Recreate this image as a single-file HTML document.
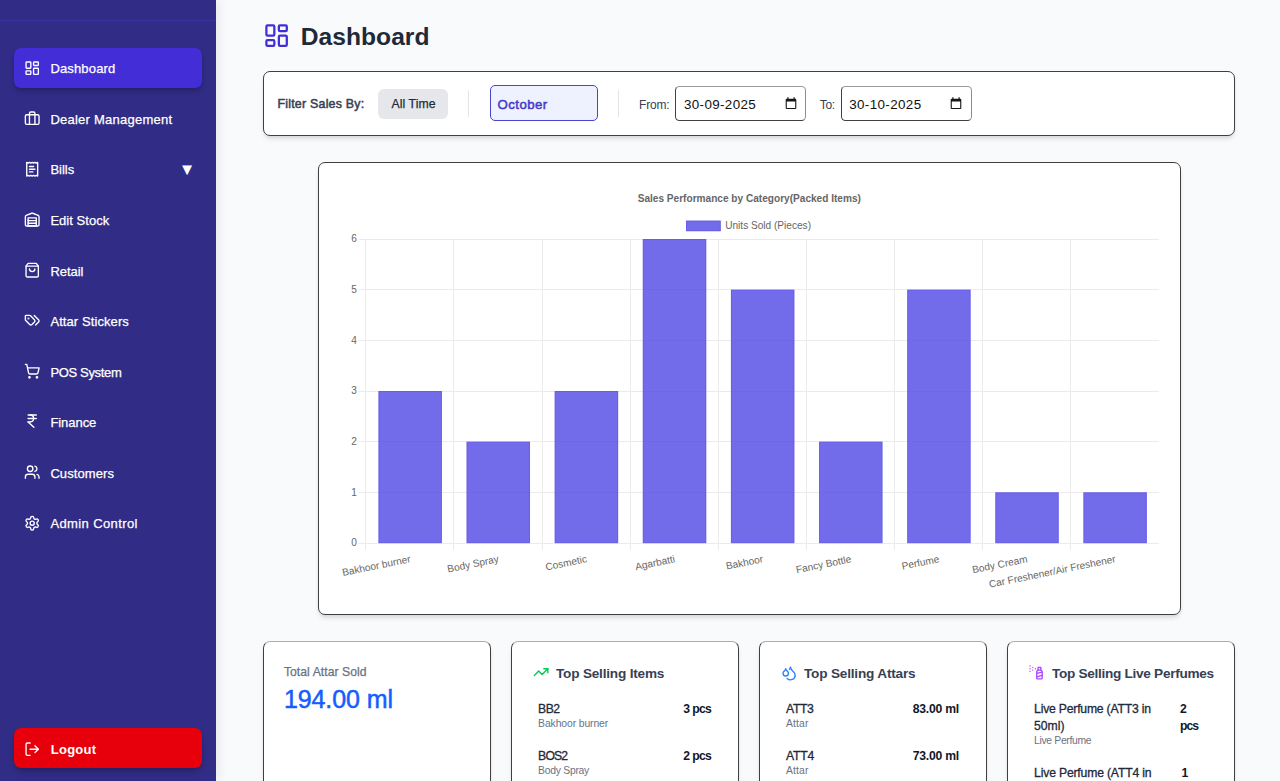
<!DOCTYPE html>
<html lang="en">
<head>
<meta charset="utf-8">
<title>Dashboard</title>
<style>
*{box-sizing:border-box;margin:0;padding:0}
html,body{width:1280px;height:781px;overflow:hidden}
body{position:relative;background:#f9fafb;font-family:"Liberation Sans", Arial, sans-serif;}
.t{position:absolute;white-space:nowrap;line-height:1;display:block}
h1,h2{font:inherit}
ul{list-style:none}
i{font-style:normal;display:block}
.w,button.w,a.w{position:static;display:block;background:none;border:0;font:inherit;color:inherit;text-decoration:none}
.ic{position:absolute;display:block;overflow:visible}
.side{position:absolute;left:0;top:0;width:216px;height:781px;background:#312c85;box-shadow:3px 0 10px rgba(0,0,0,.07)}
.side-line{position:absolute;left:0;top:20px;width:216px;height:1px;background:#3a32a4}
.nav-active{position:absolute;left:13.5px;top:48.2px;width:188.5px;height:39.6px;border-radius:7px;background:#432dd7;box-shadow:0 4px 6px -1px rgba(0,0,0,.18),0 2px 4px -2px rgba(0,0,0,.18)}
.logout{position:absolute;left:13.5px;top:728px;width:188.5px;height:40px;border-radius:7px;background:#e7000b;box-shadow:0 4px 6px -1px rgba(0,0,0,.2),0 2px 4px -2px rgba(0,0,0,.2)}
.card{position:absolute;background:#fff;border:1px solid #404040;border-radius:7px;box-shadow:0 4px 5px -1px rgba(0,0,0,.1),0 2px 4px -2px rgba(0,0,0,.1)}
.filter{left:263px;top:71px;width:972px;height:65px}
.chart{left:318px;top:162px;width:863px;height:453px}
.stat{top:641px;width:227.5px;height:200px;border-top-color:#adadad}
.btn-all{position:absolute;left:378.2px;top:88.6px;width:69.8px;height:30px;border-radius:6px;background:#e5e7eb}
.btn-oct{position:absolute;left:489.5px;top:85px;width:108.5px;height:36.3px;border-radius:5px;background:#eef2ff;border:1.6px solid #4c42cc}
.vdiv{position:absolute;top:89.7px;width:1px;height:27.3px;background:#e3e5e9}
.date{position:absolute;top:86px;width:131.3px;height:35px;border:1px solid #404040;border-top-color:#9a9a9a;border-right-color:#8c8c8c;border-radius:4.5px;background:#fff}
.chartsvg{position:absolute;left:0;top:0;pointer-events:none}
</style>
</head>
<body>
<aside class="side">
<div class="side-line"></div>
<nav><ul>
<li><a class="w on">
<i class="nav-active"></i>
<svg class="ic" style="left:23.80px;top:59.60px;color:#fff" width="16.40" height="16.40" viewBox="0 0 24 24" fill="none" stroke="currentColor" stroke-width="2" stroke-linecap="round" stroke-linejoin="round"><rect width="7" height="9" x="3" y="3" rx="1"/><rect width="7" height="5" x="14" y="3" rx="1"/><rect width="7" height="9" x="14" y="12" rx="1"/><rect width="7" height="5" x="3" y="16" rx="1"/></svg>
<span class="t" style="left:50.40px;top:61.00px;font-size:13.00px;font-weight:400;color:#ffffff;letter-spacing:0.156px;line-height:15px;-webkit-text-stroke:0.25px #ffffff;">Dashboard</span>
</a></li>
<li><a class="w">
<svg class="ic" style="left:23.80px;top:110.15px;color:#fff" width="16.40" height="16.40" viewBox="0 0 24 24" fill="none" stroke="currentColor" stroke-width="2" stroke-linecap="round" stroke-linejoin="round"><rect width="20" height="14" x="2" y="7" rx="2" ry="2"/><path d="M16 21V5a2 2 0 0 0-2-2h-4a2 2 0 0 0-2 2v16"/></svg>
<span class="t" style="left:50.40px;top:112.00px;font-size:13.00px;font-weight:400;color:#ffffff;letter-spacing:0.248px;line-height:15px;-webkit-text-stroke:0.25px #ffffff;">Dealer Management</span>
</a></li>
<li><a class="w">
<svg class="ic" style="left:23.80px;top:160.70px;color:#fff" width="16.40" height="16.40" viewBox="0 0 24 24" fill="none" stroke="currentColor" stroke-width="2" stroke-linecap="round" stroke-linejoin="round"><path d="M4 2v20l2-1 2 1 2-1 2 1 2-1 2 1 2-1 2 1V2l-2 1-2-1-2 1-2-1-2 1-2-1-2 1Z"/><path d="M14 8H8"/><path d="M16 12H8"/><path d="M13 16H8"/></svg>
<span class="t" style="left:50.40px;top:162.00px;font-size:13.00px;font-weight:400;color:#ffffff;letter-spacing:-0.007px;line-height:15px;-webkit-text-stroke:0.25px #ffffff;">Bills</span>
<span class="t" style="left:178.70px;top:160.00px;font-size:16.80px;font-weight:400;color:#ffffff;letter-spacing:0.000px;line-height:19px;">▼</span>
</a></li>
<li><a class="w">
<svg class="ic" style="left:23.80px;top:211.25px;color:#fff" width="16.40" height="16.40" viewBox="0 0 24 24" fill="none" stroke="currentColor" stroke-width="2" stroke-linecap="round" stroke-linejoin="round"><path d="M22 8.35V20a2 2 0 0 1-2 2H4a2 2 0 0 1-2-2V8.35A2 2 0 0 1 3.26 6.5l8-3.2a2 2 0 0 1 1.48 0l8 3.2A2 2 0 0 1 22 8.35Z"/><path d="M6 18h12"/><path d="M6 14h12"/><rect width="12" height="12" x="6" y="10"/></svg>
<span class="t" style="left:50.40px;top:213.00px;font-size:13.00px;font-weight:400;color:#ffffff;letter-spacing:0.038px;line-height:15px;-webkit-text-stroke:0.25px #ffffff;">Edit Stock</span>
</a></li>
<li><a class="w">
<svg class="ic" style="left:23.80px;top:261.80px;color:#fff" width="16.40" height="16.40" viewBox="0 0 24 24" fill="none" stroke="currentColor" stroke-width="2" stroke-linecap="round" stroke-linejoin="round"><path d="M6 2 3 6v14a2 2 0 0 0 2 2h14a2 2 0 0 0 2-2V6l-3-4Z"/><path d="M3 6h18"/><path d="M16 10a4 4 0 0 1-8 0"/></svg>
<span class="t" style="left:50.40px;top:264.00px;font-size:13.00px;font-weight:400;color:#ffffff;letter-spacing:-0.040px;line-height:15px;-webkit-text-stroke:0.25px #ffffff;">Retail</span>
</a></li>
<li><a class="w">
<svg class="ic" style="left:23.80px;top:312.35px;color:#fff" width="16.40" height="16.40" viewBox="0 0 24 24" fill="none" stroke="currentColor" stroke-width="2" stroke-linecap="round" stroke-linejoin="round"><path d="m15 5 6.3 6.3a2.4 2.4 0 0 1 0 3.4L17 19"/><path d="M9.586 5.586A2 2 0 0 0 8.172 5H3a1 1 0 0 0-1 1v5.172a2 2 0 0 0 .586 1.414L8.29 18.29a2.426 2.426 0 0 0 3.42 0l3.58-3.58a2.426 2.426 0 0 0 0-3.42z"/><circle cx="6.5" cy="9.5" r=".5" fill="currentColor"/></svg>
<span class="t" style="left:50.40px;top:314.00px;font-size:13.00px;font-weight:400;color:#ffffff;letter-spacing:0.087px;line-height:15px;-webkit-text-stroke:0.25px #ffffff;">Attar Stickers</span>
</a></li>
<li><a class="w">
<svg class="ic" style="left:23.80px;top:362.90px;color:#fff" width="16.40" height="16.40" viewBox="0 0 24 24" fill="none" stroke="currentColor" stroke-width="2" stroke-linecap="round" stroke-linejoin="round"><circle cx="8" cy="21" r="1"/><circle cx="19" cy="21" r="1"/><path d="M2.05 2.05h2l2.66 12.42a2 2 0 0 0 2 1.58h9.78a2 2 0 0 0 1.95-1.57l1.65-7.43H5.12"/></svg>
<span class="t" style="left:50.40px;top:365.00px;font-size:13.00px;font-weight:400;color:#ffffff;letter-spacing:-0.341px;line-height:15px;-webkit-text-stroke:0.25px #ffffff;">POS System</span>
</a></li>
<li><a class="w">
<svg class="ic" style="left:23.80px;top:413.45px;color:#fff" width="16.40" height="16.40" viewBox="0 0 24 24" fill="none" stroke="currentColor" stroke-width="2" stroke-linecap="round" stroke-linejoin="round"><path d="M6 3h12"/><path d="M6 8h12"/><path d="m6 13 8.5 8"/><path d="M6 13h3"/><path d="M9 13c6.667 0 6.667-10 0-10"/></svg>
<span class="t" style="left:50.40px;top:415.00px;font-size:13.00px;font-weight:400;color:#ffffff;letter-spacing:-0.049px;line-height:15px;-webkit-text-stroke:0.25px #ffffff;">Finance</span>
</a></li>
<li><a class="w">
<svg class="ic" style="left:23.80px;top:464.00px;color:#fff" width="16.40" height="16.40" viewBox="0 0 24 24" fill="none" stroke="currentColor" stroke-width="2" stroke-linecap="round" stroke-linejoin="round"><path d="M16 21v-2a4 4 0 0 0-4-4H6a4 4 0 0 0-4 4v2"/><circle cx="9" cy="7" r="4"/><path d="M22 21v-2a4 4 0 0 0-3-3.87"/><path d="M16 3.13a4 4 0 0 1 0 7.75"/></svg>
<span class="t" style="left:50.40px;top:466.00px;font-size:13.00px;font-weight:400;color:#ffffff;letter-spacing:0.095px;line-height:15px;-webkit-text-stroke:0.25px #ffffff;">Customers</span>
</a></li>
<li><a class="w">
<svg class="ic" style="left:23.80px;top:514.55px;color:#fff" width="16.40" height="16.40" viewBox="0 0 24 24" fill="none" stroke="currentColor" stroke-width="2" stroke-linecap="round" stroke-linejoin="round"><path d="M12.22 2h-.44a2 2 0 0 0-2 2v.18a2 2 0 0 1-1 1.73l-.43.25a2 2 0 0 1-2 0l-.15-.08a2 2 0 0 0-2.73.73l-.22.38a2 2 0 0 0 .73 2.73l.15.1a2 2 0 0 1 1 1.72v.51a2 2 0 0 1-1 1.74l-.15.09a2 2 0 0 0-.73 2.73l.22.38a2 2 0 0 0 2.73.73l.15-.08a2 2 0 0 1 2 0l.43.25a2 2 0 0 1 1 1.73V20a2 2 0 0 0 2 2h.44a2 2 0 0 0 2-2v-.18a2 2 0 0 1 1-1.73l.43-.25a2 2 0 0 1 2 0l.15.08a2 2 0 0 0 2.73-.73l.22-.39a2 2 0 0 0-.73-2.73l-.15-.08a2 2 0 0 1-1-1.74v-.5a2 2 0 0 1 1-1.74l.15-.09a2 2 0 0 0 .73-2.73l-.22-.38a2 2 0 0 0-2.73-.73l-.15.08a2 2 0 0 1-2 0l-.43-.25a2 2 0 0 1-1-1.73V4a2 2 0 0 0-2-2z"/><circle cx="12" cy="12" r="3"/></svg>
<span class="t" style="left:50.40px;top:516.00px;font-size:13.00px;font-weight:400;color:#ffffff;letter-spacing:0.387px;line-height:15px;-webkit-text-stroke:0.25px #ffffff;">Admin Control</span>
</a></li>
</ul></nav>
<button class="w">
<i class="logout"></i>
<svg class="ic" style="left:23.80px;top:740.50px;color:#fff" width="16.40" height="16.40" viewBox="0 0 24 24" fill="none" stroke="currentColor" stroke-width="2" stroke-linecap="round" stroke-linejoin="round"><path d="M9 21H5a2 2 0 0 1-2-2V5a2 2 0 0 1 2-2h4"/><polyline points="16 17 21 12 16 7"/><line x1="21" x2="9" y1="12" y2="12"/></svg>
<span class="t" style="left:50.80px;top:742.00px;font-size:13.00px;font-weight:700;color:#ffffff;letter-spacing:0.227px;line-height:15px;">Logout</span>
</button>
</aside>
<main>
<header>
<svg class="ic" style="left:262.90px;top:22.20px;color:#432dd7" width="27.20" height="27.20" viewBox="0 0 24 24" fill="none" stroke="currentColor" stroke-width="2" stroke-linecap="round" stroke-linejoin="round"><rect width="7" height="9" x="3" y="3" rx="1"/><rect width="7" height="5" x="14" y="3" rx="1"/><rect width="7" height="9" x="14" y="12" rx="1"/><rect width="7" height="5" x="3" y="16" rx="1"/></svg>
<h1><span class="t" style="left:300.80px;top:23.00px;font-size:24.60px;font-weight:700;color:#1e2939;letter-spacing:0.028px;line-height:27px;">Dashboard</span></h1>
</header>
<section class="w">
<div class="card filter"></div>
<label class="w"><span class="t" style="left:277.40px;top:97.00px;font-size:12.40px;font-weight:400;color:#364153;letter-spacing:0.234px;line-height:14px;-webkit-text-stroke:0.5px #364153;">Filter Sales By:</span></label>
<button class="w"><i class="btn-all"></i><span class="t" style="left:391.50px;top:97.00px;font-size:12.20px;font-weight:400;color:#1e2939;letter-spacing:0.089px;line-height:14px;-webkit-text-stroke:0.25px #1e2939;">All Time</span></button>
<i class="vdiv" style="left:468px"></i>
<button class="w"><i class="btn-oct"></i><span class="t" style="left:497.60px;top:97.00px;font-size:13.20px;font-weight:400;color:#4338ca;letter-spacing:0.443px;line-height:15px;-webkit-text-stroke:0.5px #4338ca;">October</span></button>
<i class="vdiv" style="left:618px"></i>
<label class="w"><span class="t" style="left:639.00px;top:98.00px;font-size:12.00px;font-weight:400;color:#364153;letter-spacing:-0.201px;line-height:14px;">From:</span></label>
<div class="w"><i class="date" style="left:675px"></i><span class="t" style="left:684.00px;top:97.00px;font-size:13.40px;font-weight:400;color:#111;letter-spacing:0.354px;line-height:15px;">30-09-2025</span><svg class="ic" style="left:784.8px;top:96.9px" width="12" height="13" viewBox="0 0 12 13"><path d="M2.3 0.2h1.2v1.5h5v-1.5h1.2v1.5h0.5a1.1 1.1 0 0 1 1.1 1.1v8.2a1.1 1.1 0 0 1-1.1 1.1h-8.4a1.1 1.1 0 0 1-1.1-1.1v-8.2a1.1 1.1 0 0 1 1.1-1.1h0.5zM1.8 4.4v6.6h8.4v-6.6z" fill="#161616" fill-rule="evenodd"/></svg></div>
<label class="w"><span class="t" style="left:819.80px;top:98.00px;font-size:12.00px;font-weight:400;color:#364153;letter-spacing:-0.359px;line-height:14px;">To:</span></label>
<div class="w"><i class="date" style="left:841px"></i><span class="t" style="left:849.20px;top:97.00px;font-size:13.40px;font-weight:400;color:#111;letter-spacing:0.384px;line-height:15px;">30-10-2025</span><svg class="ic" style="left:949.8px;top:96.9px" width="12" height="13" viewBox="0 0 12 13"><path d="M2.3 0.2h1.2v1.5h5v-1.5h1.2v1.5h0.5a1.1 1.1 0 0 1 1.1 1.1v8.2a1.1 1.1 0 0 1-1.1 1.1h-8.4a1.1 1.1 0 0 1-1.1-1.1v-8.2a1.1 1.1 0 0 1 1.1-1.1h0.5zM1.8 4.4v6.6h8.4v-6.6z" fill="#161616" fill-rule="evenodd"/></svg></div>
</section>
<section class="w">
<div class="card chart"></div>
<svg class="chartsvg" width="1280" height="781" viewBox="0 0 1280 781" font-family='"Liberation Sans", Arial, sans-serif' font-size="10.1" fill="#666"><g stroke="#ebebeb" stroke-width="1"><line x1="358.60" x2="1158.90" y1="239.50" y2="239.50"/><line x1="358.60" x2="1158.90" y1="289.50" y2="289.50"/><line x1="358.60" x2="1158.90" y1="340.50" y2="340.50"/><line x1="358.60" x2="1158.90" y1="391.50" y2="391.50"/><line x1="358.60" x2="1158.90" y1="441.50" y2="441.50"/><line x1="358.60" x2="1158.90" y1="492.50" y2="492.50"/><line x1="358.60" x2="1158.90" y1="543.50" y2="543.50"/><line x1="365.50" x2="365.50" y1="239.00" y2="550.20"/><line x1="453.50" x2="453.50" y1="239.00" y2="550.20"/><line x1="542.50" x2="542.50" y1="239.00" y2="550.20"/><line x1="630.50" x2="630.50" y1="239.00" y2="550.20"/><line x1="718.50" x2="718.50" y1="239.00" y2="550.20"/><line x1="806.50" x2="806.50" y1="239.00" y2="550.20"/><line x1="894.50" x2="894.50" y1="239.00" y2="550.20"/><line x1="982.50" x2="982.50" y1="239.00" y2="550.20"/><line x1="1070.50" x2="1070.50" y1="239.00" y2="550.20"/></g><g text-anchor="end"><text x="356.9" y="242.45">6</text><text x="356.9" y="293.12">5</text><text x="356.9" y="343.78">4</text><text x="356.9" y="394.45">3</text><text x="356.9" y="445.12">2</text><text x="356.9" y="495.78">1</text><text x="356.9" y="546.45">0</text></g><g fill="rgba(79,70,229,0.8)"><rect x="378.44" y="391.00" width="63.45" height="152.00"/><rect x="466.56" y="441.67" width="63.45" height="101.33"/><rect x="554.68" y="391.00" width="63.45" height="152.00"/><rect x="642.80" y="239.00" width="63.45" height="304.00"/><rect x="730.93" y="289.67" width="63.45" height="253.33"/><rect x="819.05" y="441.67" width="63.45" height="101.33"/><rect x="907.17" y="289.67" width="63.45" height="253.33"/><rect x="995.29" y="492.33" width="63.45" height="50.67"/><rect x="1083.41" y="492.33" width="63.45" height="50.67"/></g><g fill="none" stroke="rgba(79,70,229,0.3)" stroke-width="1"><rect x="378.94" y="391.50" width="62.45" height="151.50"/><rect x="467.06" y="442.17" width="62.45" height="100.83"/><rect x="555.18" y="391.50" width="62.45" height="151.50"/><rect x="643.30" y="239.50" width="62.45" height="303.50"/><rect x="731.43" y="290.17" width="62.45" height="252.83"/><rect x="819.55" y="442.17" width="62.45" height="100.83"/><rect x="907.67" y="290.17" width="62.45" height="252.83"/><rect x="995.79" y="492.83" width="62.45" height="50.17"/><rect x="1083.91" y="492.83" width="62.45" height="50.17"/></g><g text-anchor="end"><text transform="translate(409.26,552.90) rotate(-11.5)" y="9.4">Bakhoor burner</text><text transform="translate(497.38,552.90) rotate(-11.5)" y="9.4">Body Spray</text><text transform="translate(585.51,552.90) rotate(-11.5)" y="9.4">Cosmetic</text><text transform="translate(673.63,552.90) rotate(-11.5)" y="9.4">Agarbatti</text><text transform="translate(761.75,552.90) rotate(-11.5)" y="9.4">Bakhoor</text><text transform="translate(849.87,552.90) rotate(-11.5)" y="9.4">Fancy Bottle</text><text transform="translate(937.99,552.90) rotate(-11.5)" y="9.4">Perfume</text><text transform="translate(1026.12,552.90) rotate(-11.5)" y="9.4">Body Cream</text><text transform="translate(1114.24,552.90) rotate(-11.5)" y="9.4">Car Freshener/Air Freshener</text></g><text x="749.3" y="201.7" text-anchor="middle" font-weight="700">Sales Performance by Category(Packed Items)</text><rect x="686" y="220.6" width="34.8" height="10.6" fill="rgba(79,70,229,0.8)"/><rect x="686.5" y="221.1" width="33.8" height="9.6" fill="none" stroke="rgba(79,70,229,0.3)" stroke-width="1"/><text x="725.2" y="229.3">Units Sold (Pieces)</text></svg>
</section>
<section class="w">
<div class="card stat" style="left:263.00px"></div>
<p class="w"><span class="t" style="left:283.90px;top:665.00px;font-size:12.20px;font-weight:400;color:#6a7282;letter-spacing:0.048px;line-height:14px;-webkit-text-stroke:0.25px #6a7282;">Total Attar Sold</span></p>
<p class="w"><span class="t" style="left:283.90px;top:685.00px;font-size:25.00px;font-weight:400;color:#155dfc;letter-spacing:-0.083px;line-height:28px;-webkit-text-stroke:0.5px #155dfc;">194.00 ml</span></p>
</section>
<section class="w">
<div class="card stat" style="left:511.15px"></div>
<h2><svg class="ic" style="left:532.50px;top:664.40px;color:#00c950" width="16.20" height="16.20" viewBox="0 0 24 24" fill="none" stroke="currentColor" stroke-width="2" stroke-linecap="round" stroke-linejoin="round"><polyline points="22 7 13.5 15.5 8.5 10.5 2 17"/><polyline points="16 7 22 7 22 13"/></svg><span class="t" style="left:556.00px;top:666.00px;font-size:13.60px;font-weight:700;color:#364153;letter-spacing:-0.199px;line-height:15px;">Top Selling Items</span></h2>
<ul>
<li><span class="t" style="left:538.10px;top:702.00px;font-size:12.20px;font-weight:400;color:#1e2939;letter-spacing:-0.564px;line-height:14px;-webkit-text-stroke:0.3px #1e2939;">BB2</span><span class="t" style="left:538.10px;top:718.00px;font-size:10.40px;font-weight:400;color:#6a7282;letter-spacing:-0.114px;line-height:11px;">Bakhoor burner</span><span class="t" style="left:683.30px;top:702.00px;font-size:12.20px;font-weight:700;color:#101828;letter-spacing:-0.664px;line-height:14px;">3 pcs</span></li>
<li><span class="t" style="left:538.10px;top:749.00px;font-size:12.20px;font-weight:400;color:#1e2939;letter-spacing:-0.819px;line-height:14px;-webkit-text-stroke:0.3px #1e2939;">BOS2</span><span class="t" style="left:538.10px;top:765.00px;font-size:10.40px;font-weight:400;color:#6a7282;letter-spacing:-0.279px;line-height:11px;">Body Spray</span><span class="t" style="left:683.30px;top:749.00px;font-size:12.20px;font-weight:700;color:#101828;letter-spacing:-0.664px;line-height:14px;">2 pcs</span></li>
</ul></section>
<section class="w">
<div class="card stat" style="left:759.30px"></div>
<h2><svg class="ic" style="left:780.50px;top:664.60px;color:#2b7fff" width="16.20" height="16.20" viewBox="0 0 24 24" fill="none" stroke="currentColor" stroke-width="2" stroke-linecap="round" stroke-linejoin="round"><path d="M7 16.3c2.2 0 4-1.83 4-4.05 0-1.16-.57-2.26-1.71-3.19S7.29 6.75 7 5.3c-.29 1.45-1.14 2.84-2.29 3.76S3 11.1 3 12.25c0 2.22 1.8 4.05 4 4.05z"/><path d="M12.56 6.6A10.97 10.97 0 0 0 14 3.02c.5 2.5 2 4.9 4 6.5s3 3.5 3 5.5a6.98 6.98 0 0 1-11.91 4.97"/></svg><span class="t" style="left:804.00px;top:666.00px;font-size:13.60px;font-weight:700;color:#364153;letter-spacing:-0.186px;line-height:15px;">Top Selling Attars</span></h2>
<ul>
<li><span class="t" style="left:786.10px;top:702.00px;font-size:12.20px;font-weight:400;color:#1e2939;letter-spacing:-0.413px;line-height:14px;-webkit-text-stroke:0.3px #1e2939;">ATT3</span><span class="t" style="left:786.10px;top:718.00px;font-size:10.40px;font-weight:400;color:#6a7282;letter-spacing:0.095px;line-height:11px;">Attar</span><span class="t" style="left:912.80px;top:702.00px;font-size:12.20px;font-weight:700;color:#101828;letter-spacing:-0.244px;line-height:14px;">83.00 ml</span></li>
<li><span class="t" style="left:786.10px;top:749.00px;font-size:12.20px;font-weight:400;color:#1e2939;letter-spacing:-0.263px;line-height:14px;-webkit-text-stroke:0.3px #1e2939;">ATT4</span><span class="t" style="left:786.10px;top:765.00px;font-size:10.40px;font-weight:400;color:#6a7282;letter-spacing:0.095px;line-height:11px;">Attar</span><span class="t" style="left:912.80px;top:749.00px;font-size:12.20px;font-weight:700;color:#101828;letter-spacing:-0.244px;line-height:14px;">73.00 ml</span></li>
</ul></section>
<section class="w">
<div class="card stat" style="left:1007.45px"></div>
<h2><svg class="ic" style="left:1028.10px;top:664.30px;color:#ad46ff" width="16.20" height="16.20" viewBox="0 0 24 24" fill="none" stroke="currentColor" stroke-width="2" stroke-linecap="round" stroke-linejoin="round"><path d="M3 3h.01"/><path d="M7 5h.01"/><path d="M11 7h.01"/><path d="M3 7h.01"/><path d="M7 9h.01"/><path d="M3 11h.01"/><rect width="4" height="4" x="15" y="5"/><path d="m19 9 2 2v10c0 .6-.4 1-1 1h-6c-.6 0-1-.4-1-1V11l2-2"/><path d="m13 14 8-2"/><path d="m13 19 8-2"/></svg><span class="t" style="left:1052.00px;top:666.00px;font-size:13.60px;font-weight:700;color:#364153;letter-spacing:-0.288px;line-height:15px;">Top Selling Live Perfumes</span></h2>
<ul>
<li><span class="t" style="left:1034.10px;top:702.00px;font-size:12.20px;font-weight:400;color:#1e2939;letter-spacing:-0.208px;line-height:14px;-webkit-text-stroke:0.3px #1e2939;">Live Perfume (ATT3 in</span><span class="t" style="left:1034.10px;top:719.00px;font-size:12.20px;font-weight:400;color:#1e2939;letter-spacing:-0.026px;line-height:14px;-webkit-text-stroke:0.3px #1e2939;">50ml)</span><span class="t" style="left:1034.10px;top:735.00px;font-size:10.40px;font-weight:400;color:#6a7282;letter-spacing:-0.341px;line-height:11px;">Live Perfume</span><span class="t" style="left:1179.90px;top:702.00px;font-size:12.20px;font-weight:700;color:#101828;letter-spacing:0.073px;line-height:14px;">2</span><span class="t" style="left:1179.90px;top:719.00px;font-size:12.20px;font-weight:700;color:#101828;letter-spacing:-0.954px;line-height:14px;">pcs</span></li>
<li><span class="t" style="left:1034.10px;top:766.00px;font-size:12.20px;font-weight:400;color:#1e2939;letter-spacing:-0.179px;line-height:14px;-webkit-text-stroke:0.3px #1e2939;">Live Perfume (ATT4 in</span><span class="t" style="left:1181.50px;top:766.00px;font-size:12.20px;font-weight:700;color:#101828;letter-spacing:-1.927px;line-height:14px;">1</span></li>
</ul></section>
</main>
</body>
</html>
